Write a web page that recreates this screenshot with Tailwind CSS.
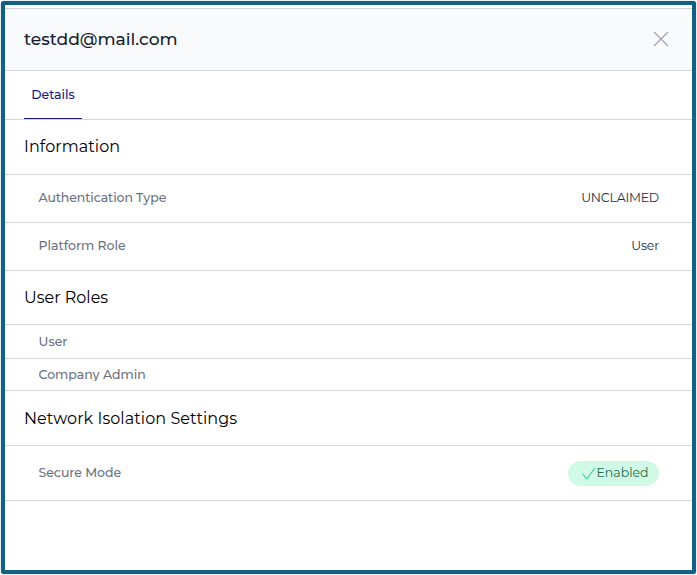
<!DOCTYPE html>
<html lang="en"><head><meta charset="utf-8"><title>User details</title>
<script src="https://cdn.jsdelivr.net/npm/@tailwindcss/browser@4"></script></head>
<body class="bg-white font-['Montserrat','Inter',sans-serif]">
<div class="h-[575px] w-[697px] overflow-hidden pt-px pl-px">
<main class="h-[573px] w-[695px] rounded-[3px] border-4 border-[#126084] bg-white pt-[3px] shadow-[0_0_1px_#126084]">
  <header class="flex h-[63px] items-center justify-between border-y border-[#d1d5db] bg-[#f9fafc] pr-[23.5px] pl-[19px]">
    <h1 class="pb-0.5 text-[17.1px] leading-6 font-medium text-[#161e2e]">testdd@mail.com</h1>
    <svg class="mb-px h-4 w-4 stroke-[#9ca3b4]" viewBox="0 0 16 16" fill="none" stroke-width="1.3" stroke-linecap="round"><path d="M1.5 1.5 14.5 14.5M14.5 1.5 1.5 14.5"/></svg>
  </header>
  <nav class="flex h-[49px] border-b border-[#d1d5db] pl-[19px]">
    <a class="flex h-12 w-[58px] items-center justify-center border-b border-[#1a1a8c] pt-0.5 text-[12.5px] font-medium text-[#1a1a80]">Details</a>
  </nav>
  <h2 class="flex h-[55px] items-center border-b border-[#d2d6dc] pb-px pl-[19px] text-[16px] tracking-[0.08px] text-black">Information</h2>
  <div class="flex h-12 items-center justify-between border-b border-[#d2d6dc] pr-[33px] pl-[33.5px] text-[12.5px]">
    <span class="font-medium tracking-[-0.1px] text-[#6b7280]">Authentication Type</span><span class="tracking-[-0.2px] text-[#252f3f]">UNCLAIMED</span>
  </div>
  <div class="flex h-12 items-center justify-between border-b border-[#d2d6dc] pr-[33px] pl-[33.5px] text-[12.5px]">
    <span class="font-medium text-[#6b7280]">Platform Role</span><span class="tracking-[-0.2px] text-[#252f3f]">User</span>
  </div>
  <h2 class="flex h-[54px] items-center border-b border-[#d2d6dc] pl-[19px] text-[16px] text-black">User Roles</h2>
  <div class="flex h-[34px] items-center border-b border-[#d2d6dc] pt-0.5 pl-[33.5px] text-[12.5px] font-medium text-[#6b7280]">User</div>
  <div class="flex h-8 items-center border-b border-[#d2d6dc] pb-0.5 pl-[33.5px] text-[12.5px] font-medium text-[#6b7280]"><span class="h-[15px] overflow-hidden leading-[17px]">Company Admin</span></div>
  <h2 class="flex h-[55px] items-center border-b border-[#d2d6dc] pt-px pl-[19px] text-[16px] tracking-[0.07px] text-black">Network Isolation Settings</h2>
  <div class="flex h-[55px] items-center justify-between border-b border-[#d2d6dc] pr-[33px] pl-[33.5px] text-[12.5px]">
    <span class="font-medium tracking-[-0.05px] text-[#6b7280]">Secure Mode</span>
    <span class="flex h-[25px] w-[91px] items-center rounded-full bg-[#d0fae5] pl-[13.5px] text-[12.5px] text-[#1f6b52]"><svg class="mr-0.5 h-[13px] w-[13px] shrink-0 stroke-[#34c99a]" viewBox="0 0 13 13" fill="none" stroke-width="1.1" stroke-linecap="round" stroke-linejoin="round"><path d="M1 7.5 5 11.8 12.5 1.5"/></svg>Enabled</span>
  </div>
</main>
</div>
</body></html>
